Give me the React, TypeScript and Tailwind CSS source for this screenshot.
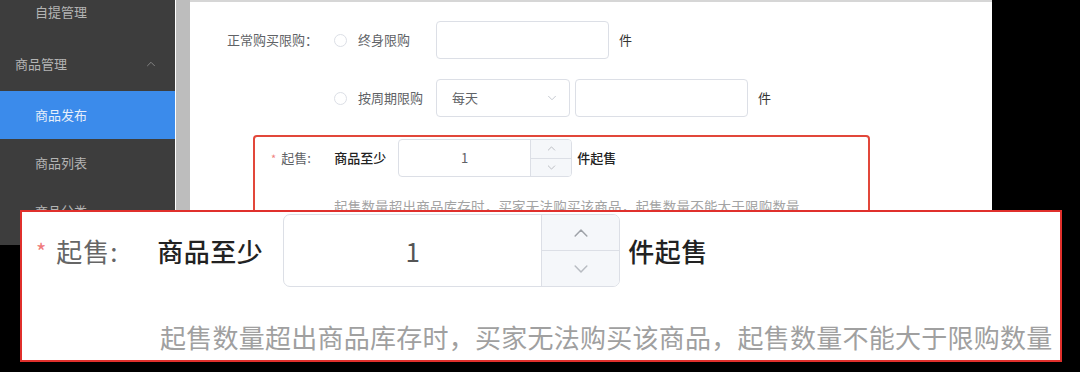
import React from 'react'

const font = { fontFamily: '"Noto Sans CJK SC", "Noto Sans", sans-serif' }

const Chevron = ({ dir, size, className }: { dir: 'up' | 'down'; size: number; className?: string }) => (
  <svg width={size} height={size} viewBox="0 0 24 24" fill="none" className={className}>
    <path
      d={dir === 'up' ? 'M5 15.5l7-7 7 7' : 'M5 8.5l7 7 7-7'}
      stroke="currentColor"
      strokeWidth="1.8"
      strokeLinecap="round"
      strokeLinejoin="round"
    />
  </svg>
)

const Radio = () => <span className="h-[13px] w-[13px] shrink-0 rounded-full border border-[#dcdfe6] bg-white" />

function SideItem({ label, active, className }: { label: string; active?: boolean; className?: string }) {
  return (
    <div
      className={
        'flex h-[48px] items-center pl-[35px] text-[13px] ' +
        (active ? 'bg-[#3b8beb] text-[#e6eefa]' : 'text-[#b4b4b4]') +
        (className ? ' ' + className : '')
      }
    >
      {label}
    </div>
  )
}

function Sidebar() {
  return (
    <div className="flex h-[245px] w-[175px] shrink-0 flex-col overflow-hidden bg-[#3d3d3d]">
      <div className="flex h-[24px] items-center pl-[35px] text-[13px] text-[#b4b4b4]">自提管理</div>
      <div className="mt-[16px] flex h-[48px] items-center justify-between pl-[15px] pr-[18px] text-[13px] text-[#b4b4b4]">
        <span>商品管理</span>
        <Chevron dir="up" size={12} className="text-[#8a8a8a]" />
      </div>
      <SideItem label="商品发布" active className="mt-[3px]" />
      <SideItem label="商品列表" />
      <SideItem label="商品分类" />
    </div>
  )
}

function SmallStepper() {
  return (
    <div className="flex h-[38px] w-[174px] overflow-hidden rounded-[4px] border border-[#dcdfe6] bg-white">
      <div className="flex flex-1 items-center justify-center text-[13px] text-[#606266]">1</div>
      <div className="flex w-[41px] flex-col border-l border-[#dcdfe6] bg-[#f5f7fa] text-[#b0b3b8]">
        <div className="flex flex-1 items-center justify-center border-b border-[#dcdfe6]">
          <Chevron dir="up" size={11} />
        </div>
        <div className="flex flex-1 items-center justify-center">
          <Chevron dir="down" size={11} />
        </div>
      </div>
    </div>
  )
}

function Content() {
  return (
    <div className="flex h-[210px] w-[802px] shrink-0 flex-col border-t-2 border-[#d6d6d6] bg-white pt-[19px] text-[13px] text-[#606266]">
      <div className="flex h-[38px] items-center">
        <div className="w-[130px] pr-[2px] text-right">正常购买限购：</div>
        <div className="flex w-[116px] items-center gap-[11px] pl-[14px]">
          <Radio />
          <span>终身限购</span>
        </div>
        <div className="h-[38px] w-[173px] rounded-[4px] border border-[#dcdfe6]" />
        <span className="ml-[10px] text-[#333]">件</span>
      </div>
      <div className="mt-[20px] flex h-[38px] items-center">
        <div className="w-[130px]" />
        <div className="flex w-[116px] items-center gap-[11px] pl-[14px]">
          <Radio />
          <span>按周期限购</span>
        </div>
        <div className="flex h-[38px] w-[134px] items-center justify-between rounded-[4px] border border-[#dcdfe6] pl-[15px] pr-[11px]">
          <span>每天</span>
          <Chevron dir="down" size={12} className="text-[#c0c4cc]" />
        </div>
        <div className="ml-[5px] h-[38px] w-[173px] rounded-[4px] border border-[#dcdfe6]" />
        <span className="ml-[10px] text-[#333]">件</span>
      </div>
      <div className="ml-[63px] mt-[18px] h-[110px] w-[617px] shrink-0 rounded-[4px] border-2 border-[#e2473a] pt-[2px]">
        <div className="flex h-[38px] items-center">
          <span className="ml-[16px] text-[11px] text-[#f08080]">*</span>
          <span className="ml-[5px] w-[53px]">起售:</span>
          <span className="font-medium text-[#222]">商品至少</span>
          <div className="ml-[12px]">
            <SmallStepper />
          </div>
          <span className="ml-[5px] font-medium text-[#222]">件起售</span>
        </div>
        <div className="ml-[79px] mt-[19px] text-[13.5px] tracking-[0.2px] text-[#a3a3a3]">
          起售数量超出商品库存时，买家无法购买该商品，起售数量不能大于限购数量
        </div>
      </div>
    </div>
  )
}

function ZoomPanel() {
  return (
    <div className="absolute left-[20px] top-[210px] h-[152px] w-[1042px] border-2 border-[#e0302c] bg-white pt-[2px]">
      <div className="flex h-[73px] items-center">
        <span className="ml-[14px] text-[22px] text-[#f07a7a]">*</span>
        <span className="ml-[10px] w-[101px] text-[26px] tracking-[1px] text-[#666]">起售:</span>
        <span className="w-[126px] text-[26px] font-medium tracking-[0.5px] text-[#222]">商品至少</span>
        <div className="flex h-[73px] w-[337px] overflow-hidden rounded-[7px] border border-[#dcdfe6] bg-white">
          <div className="flex flex-1 items-center justify-center text-[26px] text-[#555]">1</div>
          <div className="flex w-[78px] flex-col border-l border-[#dcdfe6] bg-[#f5f7fa] text-[#9ea2a8]">
            <div className="flex flex-1 items-center justify-center border-b border-[#dcdfe6]">
              <Chevron dir="up" size={20} />
            </div>
            <div className="flex flex-1 items-center justify-center text-[#b8bcc2]">
              <Chevron dir="down" size={20} />
            </div>
          </div>
        </div>
        <span className="ml-[8px] text-[26px] font-medium tracking-[0.5px] text-[#222]">件起售</span>
      </div>
      <div className="ml-[138px] mt-[32px] text-[26px] leading-[36px] tracking-[0.25px] text-[#a0a0a0]">
        起售数量超出商品库存时，买家无法购买该商品，起售数量不能大于限购数量
      </div>
    </div>
  )
}

export default function App() {
  return (
    <div className="relative h-[372px] w-[1080px] overflow-hidden bg-black" style={font}>
      <div className="flex items-start">
        <Sidebar />
        <div className="h-[212px] w-[15px] shrink-0 border-l border-white bg-[#bdbdbd]" />
        <Content />
      </div>
      <ZoomPanel />
    </div>
  )
}
